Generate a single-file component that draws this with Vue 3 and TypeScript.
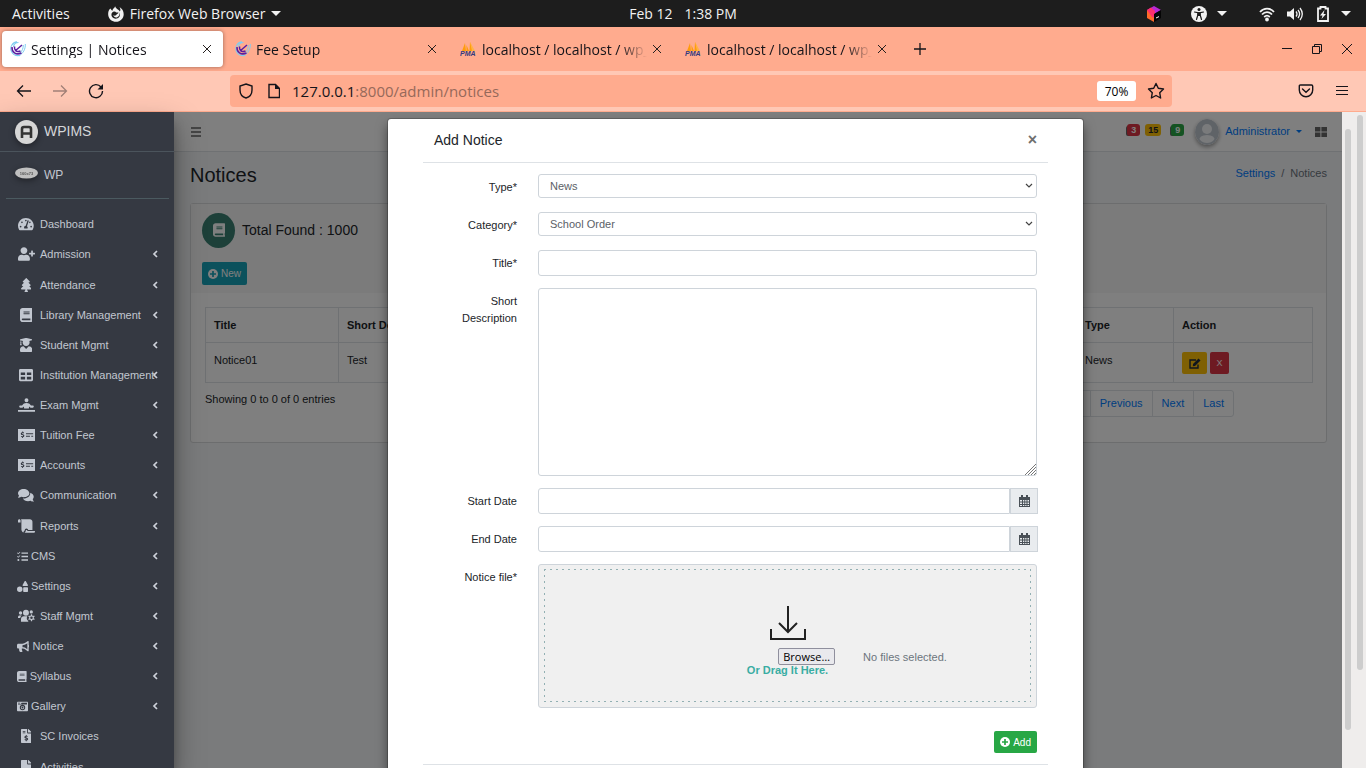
<script setup lang="ts">
import { ref } from 'vue'

interface Tab { title: string; kind: 'app' | 'pma'; active?: boolean }
interface NavItem { label: string; icon: string; arrow: boolean; compact?: boolean }

const tabs: Tab[] = [
  { title: 'Settings | Notices', kind: 'app', active: true },
  { title: 'Fee Setup', kind: 'app' },
  { title: 'localhost / localhost / wp_', kind: 'pma' },
  { title: 'localhost / localhost / wp_', kind: 'pma' },
]

const nav: NavItem[] = [
  { label: 'Dashboard', icon: 'gauge', arrow: false },
  { label: 'Admission', icon: 'userplus', arrow: true },
  { label: 'Attendance', icon: 'tree', arrow: true },
  { label: 'Library Management', icon: 'book', arrow: true },
  { label: 'Student Mgmt', icon: 'graduate', arrow: true },
  { label: 'Institution Management', icon: 'table', arrow: true },
  { label: 'Exam Mgmt', icon: 'reader', arrow: true },
  { label: 'Tuition Fee', icon: 'check', arrow: true },
  { label: 'Accounts', icon: 'check', arrow: true },
  { label: 'Communication', icon: 'comments', arrow: true },
  { label: 'Reports', icon: 'scroll', arrow: true },
  { label: 'CMS', icon: 'tasks', arrow: true, compact: true },
  { label: 'Settings', icon: 'shapes', arrow: true, compact: true },
  { label: 'Staff Mgmt', icon: 'userscog', arrow: true },
  { label: 'Notice', icon: 'bullhorn', arrow: true, compact: true },
  { label: 'Syllabus', icon: 'book', arrow: true, compact: true },
  { label: 'Gallery', icon: 'camera', arrow: true, compact: true },
  { label: 'SC Invoices', icon: 'invoice', arrow: false },
  { label: 'Activities', icon: 'file', arrow: false },
]

const icons: Record<string, { w: number; d: string }> = {
  gauge: { w: 576, d: 'M288 32C129 32 0 161 0 320c0 53 14 102 39 145 6 10 16 15 27 15h444c11 0 21-5 27-15 25-43 39-92 39-145C576 161 447 32 288 32zm0 64c18 0 32 14 32 32s-14 32-32 32-32-14-32-32 14-32 32-32zM96 384c-18 0-32-14-32-32s14-32 32-32 32 14 32 32-14 32-32 32zm48-160c-18 0-32-14-32-32s14-32 32-32 32 14 32 32-14 32-32 32zm203 192H229c-4-10-7-20-7-32 0-34 26-62 60-64l62-184c4-13 18-20 30-15 13 4 20 18 15 30l-61 184c28 21 35 53 19 81zm60-216c5-20 12-40 25-40 18 0 32 14 32 32s-14 32-32 32-25-12-25-24zm73 184c-18 0-32-14-32-32s14-32 32-32 32 14 32 32-14 32-32 32z' },
  userplus: { w: 640, d: 'M624 208h-64v-64c0-8.800-7.200-16-16-16h-32c-8.800 0-16 7.200-16 16v64h-64c-8.800 0-16 7.200-16 16v32c0 8.800 7.200 16 16 16h64v64c0 8.800 7.200 16 16 16h32c8.800 0 16-7.200 16-16v-64h64c8.800 0 16-7.200 16-16v-32c0-8.800-7.200-16-16-16zm-400 48c70.700 0 128-57.300 128-128S294.700 0 224 0 96 57.300 96 128s57.300 128 128 128zm89.600 32h-16.700c-22.200 10.200-46.900 16-72.900 16s-50.600-5.800-72.900-16h-16.700C60.200 288 0 348.200 0 422.400V464c0 26.500 21.500 48 48 48h352c26.500 0 48-21.500 48-48v-41.600c0-74.200-60.200-134.400-134.400-134.400z' },
  tree: { w: 384, d: 'M378 378l-80-90h31c9 0 17-5 21-13s3-17-3-24l-79-91h29c9 0 18-5 21-14 4-8 2-17-4-24L204 5c-6-6-18-6-24 0L70 122c-6 7-8 16-4 24 3 9 12 14 21 14h29l-79 91c-6 7-7 16-3 24s12 13 21 13h31L6 378c-6 7-8 17-4 25s12 13 21 13h137v24l-30 49c-6 11 2 23 14 23h96c12 0 20-12 14-23l-30-49v-24h137c9 0 17-5 21-13s2-18-4-25z' },
  book: { w: 448, d: 'M448 360V24c0-13-11-24-24-24H96C43 0 0 43 0 96v320c0 53 43 96 96 96h328c13 0 24-11 24-24v-16c0-7-3-14-9-19-4-15-4-59 0-74 6-5 9-12 9-19zM128 134c0-3 3-6 6-6h212c3 0 6 3 6 6v20c0 3-3 6-6 6H134c-3 0-6-3-6-6zm0 64c0-3 3-6 6-6h212c3 0 6 3 6 6v20c0 3-3 6-6 6H134c-3 0-6-3-6-6zm253 250H96c-18 0-32-14-32-32s14-32 32-32h285c-2 17-2 47 0 64z' },
  graduate: { w: 448, d: 'M320 304l-96 96-96-96C57 307 0 350 0 422v42c0 27 22 48 48 48h352c27 0 48-21 48-48v-42c0-72-57-115-128-118zM13 84l7 2v59c-7 4-12 11-12 20 0 8 4 15 11 19L3 248c-2 7 2 14 8 14h42c6 0 10-7 8-14l-16-64c7-4 11-11 11-19 0-9-5-16-12-20V92l64 15c-8 16-12 33-12 53 0 71 57 128 128 128s128-57 128-128c0-20-5-37-12-53l95-23c18-5 18-31 0-36L244 2c-13-3-27-3-40 0L13 48c-18 5-18 31 0 36z' },
  table: { w: 512, d: 'M464 32H48C21 32 0 53 0 80v352c0 27 21 48 48 48h416c27 0 48-21 48-48V80c0-27-21-48-48-48zM224 416H64v-96h160zm0-160H64v-96h160zm224 160H288v-96h160zm0-160H288v-96h160z' },
  reader: { w: 640, d: 'M320 0a74 74 0 110 148 74 74 0 010-148zM0 440h640v72H0zM210 210c60-44 160-44 220 0l58 66h66c26 0 40 18 40 40s-14 40-40 40h-82l-52-44-12 78H232l-12-78-52 44H86c-26 0-40-18-40-40s14-40 40-40h66z' },
  check: { w: 640, d: 'M0 32h640v448H0zM160 125v28c-32 5-54 24-54 52 0 34 26 46 50 54 24 8 40 11 40 26 0 13-12 18-27 18-17 0-35-5-49-14l-13 34c14 9 31 14 48 16v29h31v-30c31-5 52-24 52-54 0-33-22-45-50-54-23-8-39-12-39-26 0-11 10-16 25-16 17 0 30 5 42 11l13-34c-11-6-24-10-38-12v-28zM300 190v36h270v-36zM300 286v36h150v-36zM500 286v36h70v-36z' },
  comments: { w: 576, d: 'M416 192c0-88-93-160-208-160S0 104 0 192c0 34 14 66 38 92-14 31-35 55-36 56-3 3-3 7-1 11 2 3 5 5 9 5 46 0 84-19 107-35 28 9 59 14 91 14 115 0 208-55 208-143zm122 220c24-26 38-58 38-92 0-67-53-124-129-148 1 7 1 13 1 20 0 106-108 192-240 192-11 0-21-1-32-2 32 57 106 98 192 98 33 0 64-5 91-14 23 16 61 35 107 35 4 0 7-3 9-6 2-4 1-8-2-11 0 0-22-24-35-72z' },
  scroll: { w: 640, d: 'M48 0C22 0 0 22 0 48v64c0 9 7 16 16 16h80V48C96 22 75 0 48 0zm208 412c0-33 25-60 57-64 38-4 71 26 71 63h160V96c0-53-43-96-96-96H111c10 14 17 30 17 48v336c0 56 38 104 91 120-28-25 5-55 37-92zm160 36h208c9 0 16 7 16 16 0 27-22 48-48 48H240c29-16 48-38 48-70 0-18 12-34 30-37 20-3 37 13 37 32 0 6 5 11 11 11z' },
  tasks: { w: 512, d: 'M0 94l24-24 36 36L132 34l24 24L60 152zM0 254l24-24 36 36 72-72 24 24-96 94zM64 368a48 48 0 110 96 48 48 0 010-96zM208 64h304v64H208zM208 224h304v64H208zM208 384h304v64H208z' },
  shapes: { w: 512, d: 'M128 256a128 128 0 100 256 128 128 0 000-256zM480 288H320c-18 0-32 14-32 32v160c0 18 14 32 32 32h160c18 0 32-14 32-32V320c0-18-14-32-32-32zM412 17c-13-22-43-22-56 0l-96 166c-12 22 4 49 28 49h192c24 0 40-27 28-49z' },
  userscog: { w: 640, d: 'M96 80a64 64 0 110 128 64 64 0 010-128zM300 20a112 112 0 110 224 112 112 0 010-224zM500 40a62 62 0 110 124 62 62 0 010-124zM0 300c0-38 26-64 64-64h80c-34 24-54 54-58 98H0zM112 382c0-68 48-114 108-114h132c-12 18-18 38-18 58-12 48 12 88 52 112v34H112zM487 190l42 0 8 46 28 16 42-16 23 40-36 30v32l36 30-23 40-42-16-28 16-8 48h-42l-8-48-28-16-42 16-23-40 36-30v-32l-36-30 23-40 42 16 28-16zM508 274a48 48 0 100 96 48 48 0 000-96z' },
  bullhorn: { w: 576, d: 'M576 240c0-24-13-44-32-55V32c0-9-7-32-32-32-7 0-14 2-20 7l-85 68c-43 34-97 53-151 53H64c-35 0-64 29-64 64v96c0 35 29 64 64 64h34c-1 10-2 21-2 32 0 40 9 77 26 110 5 11 16 18 28 18h74c26 0 42-30 26-51-17-22-27-49-27-77 0-11 2-22 5-32h28c54 0 108 19 151 53l85 68c6 5 13 7 20 7 24 0 32-22 32-32V295c19-11 32-31 32-55zM480 381l-33-26c-54-43-122-67-191-67v-96c69 0 137-24 191-67l33-26z' },
  camera: { w: 512, d: 'M48 32C22 32 0 54 0 80v352c0 26 22 48 48 48h416c26 0 48-22 48-48V80c0-26-22-48-48-48zm0 48h100v32H48zm0 80V140h130l42-60h244v80zM256 180a126 126 0 110 252 126 126 0 010-252zm0 48a78 78 0 100 156 78 78 0 000-156zm0 32a46 46 0 110 92 46 46 0 010-92z' },
  invoice: { w: 384, d: 'M376 106L278 8c-4-5-10-8-17-8h-5v128h128v-6c0-6-3-12-8-16zM224 136V0H24C11 0 0 11 0 24v464c0 13 11 24 24 24h336c13 0 24-11 24-24V160H248c-13 0-24-11-24-24zM64 72h96v24H64zm0 56h96v24H64zm144 288v34h-32v-34c-18-1-36-8-50-20l22-28c14 10 28 14 42 14 20 0 24-20 4-27l-34-12c-54-20-44-88 16-98v-29h32v30c16 2 30 8 42 18l-22 28c-14-10-26-12-36-12-18 0-22 18-2 24l36 12c56 20 44 90-18 100z' },
  file: { w: 384, d: 'M224 136V0H24C11 0 0 11 0 24v464c0 13 11 24 24 24h336c13 0 24-11 24-24V160H248c-13 0-24-11-24-24zm160-14v6H256V0h6c6 0 12 3 17 7l98 98c4 5 7 11 7 17z' },
}

const noticeType = ref('News')
const category = ref('School Order')
const title = ref('')
const description = ref('')
const startDate = ref('')
const endDate = ref('')
const picker = ref<HTMLInputElement | null>(null)
const browse = () => picker.value?.click()
</script>

<template>
  <div class="desktop">
    <header class="topbar">
      <div class="top-left">
        <span>Activities</span>
        <span class="top-app">
          <svg width="16" height="16" viewBox="0 0 16 16"><path d="M7 0C7.200 2 4.500 2.500 4.300 5L2.300 2.500C.6 4.200 0 6.300.2 9c.5 4 3.800 6.800 7.800 6.800 4.300 0 7.700-3.500 7.700-7.600 0-3-1.500-5.600-4.200-7.200 1 1.600 1.200 3 .4 4.500C11 3.500 9.500 3.500 8.800 2.700 8 1.900 7.300 1.200 7 0zM6.200 5.600c1 .1 1.600.5 2 1h2.300c-.2 1.200-1.500 1.300-1.900 2-.8 1.600-2.600 1.200-3.300.4.3 1.900 2.200 2.900 4 2.200 2-.8 2.600-2.800 1.800-4.600 1.600 1.900.9 5.300-2.100 6-3.300.8-6-1.700-5.500-4.500.2-1.200 1-2.200 2.700-2.500z" fill="#f2f2f2" fill-rule="evenodd" /></svg>
          Firefox Web Browser
          <i class="tri"></i>
        </span>
      </div>
      <div class="clock"><span>Feb 12</span><span>1:38 PM</span></div>
      <div class="top-right">
        <svg class="cube" width="16" height="16" viewBox="0 0 16 16"><path d="M8 0l7 4-7 4-7-4z" fill="#b827d6" /><path d="M1 4l7 4v8l-7-4z" fill="#ff6a2a" /><path d="M1 4l4-2.500L9 5v7l-3-1z" fill="#ff2f6e" /><path d="M8 8l7-4v8l-7 4z" fill="#050505" /><path d="M10 12l3-1.400" stroke="#fff" /></svg>
        <svg class="access" width="16" height="16" viewBox="0 0 16 16"><circle cx="8" cy="8" r="8" fill="#f2f2f2" /><circle cx="8" cy="3.600" r="1.500" fill="#1d1d1d" /><path d="M3.500 6l4.500.8 4.500-.8M6.700 7v2.500l-1.200 4M9.300 7v2.500l1.200 4M7 7h2v2.500H7z" fill="#1d1d1d" stroke="#1d1d1d" stroke-width="1.200" stroke-linecap="round" /></svg>
        <i class="tri gap-sm"></i>
        <svg class="wifi" width="16" height="16" viewBox="0 0 16 16" fill="none" stroke="#f2f2f2" stroke-width="1.800"><path d="M1 6c4-4.500 10-4.500 14 0" /><path d="M3 8.500c3-3.200 7-3.200 10 0" /><path d="M5.200 11c1.800-1.700 3.800-1.700 5.600 0" /><circle cx="8" cy="13.500" r="1" fill="#f2f2f2" /></svg>
        <svg class="vol" width="16" height="16" viewBox="0 0 16 16"><path d="M0 5.500h3L7 2v12l-4-3.500H0z" fill="#f2f2f2" /><path d="M9 5.500q2 2.500 0 5M11 4q3.200 4 0 8M13 2q4.600 6 0 12" fill="none" stroke="#f2f2f2" stroke-width="1.300" /></svg>
        <svg class="bat" width="12" height="16" viewBox="0 0 12 16"><path d="M1 2.500h2.500V1h5v1.500H11V15H1z" fill="none" stroke="#f2f2f2" stroke-width="1.800" /><path d="M7.500 4L3 9.500h2.500L4.500 13 9 8H6.500z" fill="#f2f2f2" /></svg>
        <i class="tri gap-sm"></i>
      </div>
    </header>

    <div class="tabstrip">
      <div v-for="(t, i) in tabs" :key="i" class="tab" :class="{ active: t.active }">
        <svg v-if="t.kind === 'app'" width="16" height="16" viewBox="0 0 16 16" fill="none"><path d="M4 2C1 4 0 7.500 1.500 10.500S6.500 15 9.500 14.500M8.500 1.500A5 5 0 003.500 6M7 .8C5 1 3 2 2 4" stroke="#7fcdf0" stroke-width="1.100" /><path d="M15.300 3c.3 5-2 9-6.300 12M13.300 4c0 3-1 6-3.300 8" stroke="#7fcdf0" /><path d="M2 6c-.5 5 4 8.500 9.500 6M4.500 5.500c-.5 4 2.500 6 6 4.500M5 10L12 4" stroke="#5b1fa0" stroke-width="1.500" /></svg>
        <svg v-else width="17" height="16" viewBox="0 0 17 16"><path d="M5 2L2 10h4zM6.500 4v6H9zM10 1L9.500 10H14z" fill="#ff9c0b" /><path d="M10 1l5 9h-3z" fill="#ffb347" /><text x="0" y="15" font-family="Liberation Sans" font-size="7" font-weight="700" font-style="italic" fill="#343a7d">PMA</text></svg>
        <span class="tab-title">{{ t.title }}</span>
        <button class="icon-btn" aria-label="Close tab"><svg width="10" height="10" viewBox="0 0 10 10"><path d="M1 1l8 8M9 1L1 9" stroke="#25201f" /></svg></button>
      </div>
      <button class="icon-btn plus" aria-label="New tab"><svg width="12" height="12" viewBox="0 0 12 12"><path d="M6 0v12M0 6h12" stroke="#15141a" stroke-width="1.300" /></svg></button>
      <div class="win">
        <button class="icon-btn" aria-label="Minimize"><svg width="12" height="12" viewBox="0 0 12 12"><path d="M1 5.500h10" stroke="#15141a" /></svg></button>
        <button class="icon-btn" aria-label="Restore"><svg width="12" height="12" viewBox="0 0 12 12" fill="none" stroke="#15141a"><path d="M1.500 3.500h7v7h-7zM3.500 3.500v-2h7v7h-2" /></svg></button>
        <button class="icon-btn" aria-label="Close"><svg width="12" height="12" viewBox="0 0 12 12"><path d="M1 1l10 10M11 1L1 11" stroke="#15141a" /></svg></button>
      </div>
    </div>

    <div class="toolbar">
      <div class="tools">
        <button class="icon-btn" aria-label="Back"><svg width="16" height="16" viewBox="0 0 16 16" fill="none" stroke="#15141a" stroke-width="1.300"><path d="M15 8H1.500M7 2.500L1.500 8 7 13.500" /></svg></button>
        <button class="icon-btn faded" aria-label="Forward"><svg width="16" height="16" viewBox="0 0 16 16" fill="none" stroke="#15141a" stroke-width="1.300"><path d="M1 8h13.500M9 2.500L14.500 8 9 13.500" /></svg></button>
        <button class="icon-btn" aria-label="Reload"><svg width="16" height="16" viewBox="0 0 16 16" fill="none"><path d="M13 4A6.500 6.500 0 1014.500 8" stroke="#15141a" stroke-width="1.400" /><path d="M15 1v5.500H9.500z" fill="#15141a" /></svg></button>
      </div>
      <div class="urlbar">
        <svg width="16" height="16" viewBox="0 0 16 16" fill="none"><path d="M8 1l6 2v4c0 4-2.500 7-6 8-3.500-1-6-4-6-8V3z" stroke="#15141a" stroke-width="1.400" /></svg>
        <svg class="doc" width="12" height="16" viewBox="0 0 12 16"><path d="M1 1.500h6.500l4 4v9H1z" fill="none" stroke="#15141a" stroke-width="1.400" /><path d="M7 1v5h5z" fill="#15141a" /></svg>
        <span class="url">127.0.0.1<span class="dim">:8000/admin/notices</span></span>
        <button class="zoom">70%</button>
        <button class="icon-btn" aria-label="Bookmark"><svg width="18" height="18" viewBox="0 0 18 18"><path d="M9 1.500l2.300 4.800 5.200.7-3.800 3.700.9 5.300L9 13.500 4.400 16l.9-5.300L1.500 7l5.200-.7z" fill="none" stroke="#15141a" stroke-width="1.400" stroke-linejoin="round" /></svg></button>
      </div>
      <div class="tb-right">
        <button class="icon-btn" aria-label="Pocket"><svg width="16" height="16" viewBox="0 0 16 16" fill="none" stroke="#15141a" stroke-width="1.400"><path d="M2.500 2h11c.8 0 1.200.5 1.200 1.200V7a6.700 6.700 0 01-13.400 0V3.200C1.300 2.500 1.700 2 2.500 2z" /><path d="M4.500 6L8 9.300 11.500 6" stroke-linecap="round" /></svg></button>
        <button class="icon-btn" aria-label="Menu"><svg width="12" height="12" viewBox="0 0 12 12"><path d="M0 1.500h12M0 5.500h12M0 9.500h12" stroke="#15141a" stroke-width="1.200" /></svg></button>
      </div>
    </div>

    <div class="page">
      <aside class="sidebar">
        <a href="#" class="brand">
          <svg class="logo" width="23" height="24" viewBox="0 0 23 24"><ellipse cx="11.500" cy="12" rx="11.500" ry="12" fill="#d6d6d6" /><path d="M7 18V9q0-2 2-2h5q2 0 2 2v9M7 13.500h9" fill="none" stroke="#333" stroke-width="2.600" /></svg>
          WPIMS
        </a>
        <a href="#" class="user">
          <svg class="oval" width="23" height="12" viewBox="0 0 23 12"><ellipse cx="11.500" cy="6" rx="11.500" ry="5.500" fill="#bfbfbf" /><text x="11.500" y="7.500" font-size="4" font-weight="700" font-family="Liberation Sans" text-anchor="middle" fill="#555">160x73</text></svg>
          WP
        </a>
        <nav class="nav">
          <a v-for="n in nav" :key="n.label" href="#" class="item" :class="{ compact: n.compact }">
            <span class="ico"><svg :viewBox="`0 0 ${icons[n.icon].w} 512`"><path :d="icons[n.icon].d" fill-rule="evenodd" fill="currentColor" /></svg></span>
            <span>{{ n.label }}</span>
            <svg v-if="n.arrow" class="arrow" width="6" height="8" viewBox="0 0 6 8"><path d="M5 1L2 4l3 3" fill="none" stroke="#ced2da" stroke-width="1.700" /></svg>
          </a>
        </nav>
      </aside>

      <div class="main">
        <div class="navbar">
          <button class="icon-btn" aria-label="Toggle sidebar"><svg width="10" height="10" viewBox="0 0 10 10"><path d="M0 1h10M0 5h10M0 9h10" stroke="#666" stroke-width="1.300" /></svg></button>
          <div class="nav-right">
            <span class="badge red">3</span>
            <span class="badge yellow">15</span>
            <span class="badge green">9</span>
            <svg class="avatar" width="24" height="26" viewBox="0 0 24 26"><defs><clipPath id="face"><ellipse cx="12" cy="13" rx="10" ry="11" /></clipPath></defs><ellipse cx="12" cy="13" rx="12" ry="13" fill="#bfc6cf" /><g clip-path="url(#face)" fill="#f4f6f9"><circle cx="12" cy="10" r="5" /><path d="M4 25v-3q0-6 8-6t8 6v3z" /></g></svg>
            <a href="#" class="admin">Administrator<i class="caret"></i></a>
            <svg class="grid4" width="12" height="10" viewBox="0 0 12 10"><path d="M0 0h5.400v4.500H0zM6.400 0H12v4.500H6.400zM0 5.500h5.400V10H0zM6.400 5.500H12V10H6.400z" fill="#666" /></svg>
          </div>
        </div>

        <div class="content">
          <div class="head">
            <h1>Notices</h1>
            <div class="crumbs"><a href="#">Settings</a><span>/</span><span>Notices</span></div>
          </div>
          <section class="card">
            <div class="card-head">
              <div class="total">
                <span class="disc"><svg width="12" height="14" viewBox="0 0 448 512"><path :d="icons.book.d" fill-rule="evenodd" fill="#fff" /></svg></span>
                Total Found : 1000
              </div>
              <button class="btn info"><svg width="10" height="10" viewBox="0 0 10 10"><circle cx="5" cy="5" r="5" fill="#fff" /><path d="M5 2v6M2 5h6" stroke="#17a2b8" stroke-width="1.700" /></svg>New</button>
            </div>
            <div class="card-body">
              <table>
                <thead><tr><th class="c1">Title</th><th>Short Description</th><th class="c3">Type</th><th class="c4">Action</th></tr></thead>
                <tbody><tr><td>Notice01</td><td>Test</td><td>News</td><td><div class="acts"><button class="btn warn" aria-label="Edit"><svg width="12" height="11" viewBox="0 0 12 11"><path d="M7 2H1v8h8V6.500" fill="none" stroke="#1f2d3d" stroke-width="1.400" /><path d="M4 6l5.500-5.500 2 2L6 8l-2.200.3z" fill="#1f2d3d" /></svg></button><button class="btn danger">X</button></div></td></tr></tbody>
              </table>
              <div class="foot">
                <span>Showing 0 to 0 of 0 entries</span>
                <div class="pager"><a href="#">First</a><a href="#">Previous</a><a href="#">Next</a><a href="#">Last</a></div>
              </div>
            </div>
          </section>
        </div>

        <div class="backdrop">
          <form class="modal" @submit.prevent>
            <div class="modal-head">
              <h2>Add Notice</h2>
              <button type="button" class="icon-btn close" aria-label="Close dialog">×</button>
            </div>
            <div class="fields">
              <label for="type">Type*</label>
              <div class="sel"><select id="type" v-model="noticeType"><option>News</option></select><svg width="8" height="6" viewBox="0 0 8 6"><path d="M1 1l3 3 3-3" fill="none" stroke="#444" stroke-width="1.200" /></svg></div>
              <label for="category">Category*</label>
              <div class="sel"><select id="category" v-model="category"><option>School Order</option></select><svg width="8" height="6" viewBox="0 0 8 6"><path d="M1 1l3 3 3-3" fill="none" stroke="#444" stroke-width="1.200" /></svg></div>
              <label for="title">Title*</label>
              <input id="title" v-model="title" type="text" class="ctl">
              <label for="desc">Short Description</label>
              <div class="area"><textarea id="desc" v-model="description" class="ctl"></textarea><svg width="11" height="11" viewBox="0 0 11 11"><path d="M0 11L11 0M3 11l8-8M6 11l5-5M9 11l2-2" stroke="#777" /></svg></div>
              <label for="start">Start Date</label>
              <div class="date"><input id="start" v-model="startDate" type="text" class="ctl"><span class="addon"><svg width="11" height="12" viewBox="0 0 11 12"><path d="M0 2h2V0h2v2h3V0h2v2h2v10H0zM1 5v1.500h2V5zm3 0v1.500h1.300V5zm2.200 0v1.500h1.300V5zm2.300 0v1.500H10V5zM1 7.500V9h2V7.500zm3 0V9h1.300V7.500zm2.200 0V9h1.300V7.500zm2.300 0V9H10V7.500zM1 10v1h2v-1zm3 0v1h1.300v-1zm2.200 0v1h1.300v-1zm2.300 0v1H10v-1z" fill="#495057" fill-rule="evenodd" /></svg></span></div>
              <label for="end">End Date</label>
              <div class="date"><input id="end" v-model="endDate" type="text" class="ctl"><span class="addon"><svg width="11" height="12" viewBox="0 0 11 12"><path d="M0 2h2V0h2v2h3V0h2v2h2v10H0zM1 5v1.500h2V5zm3 0v1.500h1.300V5zm2.200 0v1.500h1.300V5zm2.300 0v1.500H10V5zM1 7.500V9h2V7.500zm3 0V9h1.300V7.500zm2.200 0V9h1.300V7.500zm2.300 0V9H10V7.500zM1 10v1h2v-1zm3 0v1h1.300v-1zm2.200 0v1h1.300v-1zm2.300 0v1H10v-1z" fill="#495057" fill-rule="evenodd" /></svg></span></div>
              <label for="file">Notice file*</label>
              <div class="drop">
                <input id="file" ref="picker" type="file" class="hidden-file">
                <div class="dashes">
                  <svg width="36" height="36" viewBox="0 0 36 36" fill="none" stroke="#222" stroke-width="2"><path d="M18 1v25M9 18l9 9 9-9M1 24v10h34V24" /></svg>
                  <div class="pick"><button type="button" class="browse" @click="browse">Browse…</button><span>No files selected.</span></div>
                  <strong>Or Drag It Here.</strong>
                </div>
              </div>
            </div>
            <div class="modal-foot">
              <button class="btn success"><svg width="10" height="10" viewBox="0 0 10 10"><circle cx="5" cy="5" r="5" fill="#fff" /><path d="M5 2v6M2 5h6" stroke="#28a745" stroke-width="1.700" /></svg>Add</button>
            </div>
          </form>
        </div>
      </div>

      <div class="track inner"><i></i></div>
      <div class="track outer"><i></i></div>
    </div>
  </div>
</template>

<style>
html, body { margin: 0; overflow: hidden; }
</style>

<style scoped>
* { box-sizing: border-box; }
.desktop { height: 100vh; display: flex; flex-direction: column; overflow: hidden; font: 11px/17px "Liberation Sans", Arial, sans-serif; color: #212529; }
a { text-decoration: none; color: #007bff; }
svg { display: block; flex: none; }
button, input, select, textarea { font: inherit; margin: 0; }
.icon-btn { border: 0; background: none; padding: 0; display: flex; align-items: center; justify-content: center; flex: none; }

.topbar { flex: none; height: 27px; background: #1d1d1d; color: #f2f2f2; display: grid; grid-template-columns: 1fr auto 1fr; align-items: center; font-family: "Open Sans", "Noto Sans", sans-serif; font-size: 14px; padding: 0 15px; white-space: nowrap; }
.top-left, .top-app, .clock, .top-right { display: flex; align-items: center; }
.top-left { gap: 38px; margin-left: -3px; }
.top-app { gap: 6px; }
.clock { gap: 12px; }
.top-right { justify-content: flex-end; }
.tri { border: 5px solid transparent; border-top-color: #f2f2f2; border-bottom: 0; }
.gap-sm { margin-left: 10px; }
.access { margin-left: 29px; }
.wifi { margin-left: 32px; }
.vol { margin-left: 12px; }
.bat { margin-left: 14px; }
.top-right .gap-sm:last-child { margin-left: 12px; }

.tabstrip { flex: none; height: 44px; background: #ffab8e; display: flex; align-items: center; gap: 4px; padding: 0 13px 0 2px; font-family: "Open Sans", "Noto Sans", sans-serif; font-size: 14px; color: #15141a; }
.tab { width: 221px; height: 36px; border-radius: 4px; display: flex; align-items: center; gap: 5px; padding: 0 11px 0 8px; }
.tab.active { background: #fff; box-shadow: 0 0 4px rgba(0, 0, 0, .4); }
.tab-title { flex: 1; min-width: 0; overflow: hidden; white-space: nowrap; mask-image: linear-gradient(to right, #000 84%, transparent); }
.plus { margin-left: 12px; }
.win { margin-left: auto; display: flex; gap: 18px; }

.toolbar { flex: none; height: 41px; background: #ffc8b5; border-bottom: 1px solid #ffab8e; display: flex; align-items: center; padding: 0 18px 0 16px; font-family: "Open Sans", "Noto Sans", sans-serif; font-size: 15px; color: #15141a; }
.tools { display: flex; gap: 20px; width: 214px; }
.faded { opacity: .4; }
.urlbar { flex: 1; height: 32px; background: #ffab8e; border-radius: 4px; display: flex; align-items: center; padding: 0 7px 0 8px; }
.doc { margin-left: 14px; }
.url { flex: 1; margin-left: 12px; }
.dim { color: #96695a; }
.zoom { border: 0; background: #fff; border-radius: 3px; height: 20px; width: 39px; padding: 0; font-size: 12px; margin-right: 11px; }
.tb-right { display: flex; gap: 22px; margin-left: 126px; }

.page { flex: 1; min-height: 0; display: flex; background: #efedec; }
.sidebar { flex: none; width: 174px; overflow: hidden; background: #353942; color: #c2c7d0; z-index: 2; box-shadow: 0 14px 28px rgba(0, 0, 0, .35), 0 10px 10px rgba(0, 0, 0, .22); }
.sidebar a { color: #c2c7d0; display: flex; align-items: center; }
.sidebar .brand { height: 40px; border-bottom: 1px solid #4b545c; padding-left: 15px; gap: 6px; font-size: 14px; color: #d4d6d9; }
.logo, .oval { filter: drop-shadow(0 2px 3px rgba(0, 0, 0, .4)); }
.sidebar .user { height: 47px; margin: 0 5px 0 6px; padding-left: 9px; gap: 6px; border-bottom: 1px solid #4b5a60; font-size: 12px; }
.oval { margin-bottom: 4px; }
.nav { padding-top: 10px; }
.nav .item { height: 30px; padding: 0 16px 0 17px; gap: 5px; white-space: nowrap; position: relative; }
.item:nth-child(8n+3) { margin-top: 1px; }
.ico { width: 18px; height: 14px; display: flex; justify-content: center; flex: none; }
.ico svg { height: 14px; max-width: 17px; }
.nav .compact { gap: 3px; }
.compact .ico { width: auto; height: 11px; }
.compact .ico svg { height: 11px; }
.arrow { position: absolute; right: 16px; top: 11px; }

.main { flex: 1; min-width: 0; position: relative; background: #f4f6f9; overflow: hidden; }
.navbar { height: 40px; background: #fff; border-bottom: 1px solid #dee2e6; display: flex; align-items: center; justify-content: space-between; padding: 0 15px 0 17px; }
.nav-right { display: flex; align-items: center; }
.badge { height: 12px; padding: 0 3px; border-radius: 3px; font-size: 9px; line-height: 12px; font-weight: 700; margin-bottom: 3px; }
.red { background: #dc3545; color: #fff; margin-right: 5px; box-shadow: -2px 1px 0 -1px #666; padding: 0 4px; }
.yellow { background: #ffc107; margin-right: 10px; }
.green { background: #28a745; color: #fff; margin-right: 11px; box-shadow: -2px 1px 0 -1px #666; padding: 0 4px; }
.avatar { border-radius: 50%; box-shadow: 0 2px 4px rgba(0, 0, 0, .4); }
.admin { margin-left: 6px; display: flex; align-items: center; gap: 6px; }
.caret { border: 3px solid transparent; border-top-color: #007bff; border-bottom: 0; }
.grid4 { margin-left: 13px; }
.content { padding: 11px 15px 0 16px; }
.head { display: flex; justify-content: space-between; height: 40px; }
h1 { margin: 0; font-size: 20px; line-height: 24px; font-weight: 400; }
.crumbs { display: flex; gap: 6px; line-height: 20px; color: #6c757d; }
.card { background: #fff; border: 1px solid #d9dbdd; border-radius: 3px; height: 240px; }
.card-head { background: #f7f7f7; height: 89px; padding: 8px 11px; }
.total { display: flex; align-items: center; gap: 7px; font-size: 14px; line-height: 18px; height: 36px; margin-bottom: 14px; }
.disc { width: 33px; height: 35px; border-radius: 50%; background: #3b8072; display: flex; align-items: center; justify-content: center; }
.btn { border: 0; border-radius: 2px; display: flex; align-items: center; justify-content: center; gap: 3px; font-size: 10px; color: #fff; padding: 0 6px; height: 22px; }
.info { background: #17a2b8; height: 23px; }
.card-body { padding: 14px 13px 0 14px; }
table { width: 100%; border-collapse: collapse; table-layout: fixed; }
th, td { border: 1px solid #dee2e6; text-align: left; padding: 9px 8px 8px; }
th { height: 34px; }
td { height: 40px; vertical-align: top; padding-bottom: 7px; }
.c1 { width: 133px; }
.c3 { width: 97px; }
.c4 { width: 139px; }
.acts { display: flex; gap: 3px; }
.warn { background: #ffc107; width: 25px; padding: 0; }
.danger { background: #dc3545; width: 19px; padding: 0; font-size: 9px; }
.foot { display: flex; justify-content: space-between; align-items: flex-start; padding: 7px 79px 0 0; line-height: 18px; }
.pager { display: flex; }
.pager a { border: 1px solid #dee2e6; margin-left: -1px; padding: 5px 9px; line-height: 15px; }
.pager a:last-child { border-radius: 0 3px 3px 0; }

.backdrop { position: absolute; inset: 0; background: rgba(0, 0, 0, .5); padding: 7px 259px 0 214px; }
.modal { background: #fff; border-radius: 3px; box-shadow: 0 6px 12px rgba(0, 0, 0, .5), 0 0 0 1px rgba(0, 0, 0, .2); padding: 1px 35px 0; min-height: 700px; }
.modal-head { display: flex; justify-content: space-between; align-items: center; height: 43px; border-bottom: 1px solid #dee2e6; padding: 0 11px 2px; }
h2 { margin: 0; font-size: 14px; font-weight: 400; }
.close { font-size: 16px; font-weight: 700; color: #6f6f6f; padding-bottom: 2px; }
.fields { display: grid; grid-template-columns: 83px minmax(0, 1fr); column-gap: 21px; row-gap: 12px; padding: 11px 11px 0; }
.fields label { text-align: right; padding-top: 5px; }
.ctl, select { display: block; width: 100%; border: 1px solid #ced4da; border-radius: 3px; background: #fff; color: #495057; outline: 0; }
input.ctl { height: 26px; }
.sel { position: relative; height: 26px; }
select { appearance: none; height: 24px; padding: 0 11px; color: #5b6167; }
.sel svg { position: absolute; right: 4px; top: 9px; }
.area { position: relative; }
textarea.ctl { height: 188px; resize: none; }
.area svg { position: absolute; right: 1px; bottom: 1px; }
.date { display: flex; margin-right: -1px; }
.date .ctl { border-radius: 3px 0 0 3px; flex: 1; min-width: 0; }
.addon { width: 28px; height: 26px; border: 1px solid #ced4da; background: #e9ecef; display: flex; align-items: center; justify-content: center; }
.drop { height: 144px; background: #f0f0f0; border: 1px solid #ced4da; border-radius: 3px; padding: 4px 5px 5px; }
.hidden-file { position: absolute; width: 1px; height: 1px; opacity: 0; }
.dashes {
  height: 100%; display: flex; flex-direction: column; align-items: center; padding-top: 36px;
  --dash: #92b0b3 0 2px, transparent 2px 6px;
  background:
    repeating-linear-gradient(to right, var(--dash)) top / 100% 1px no-repeat,
    repeating-linear-gradient(to right, var(--dash)) bottom / 100% 1px no-repeat,
    repeating-linear-gradient(to bottom, var(--dash)) left / 1px 100% no-repeat,
    repeating-linear-gradient(to bottom, var(--dash)) right / 1px 100% no-repeat;
}
.pick { display: flex; align-items: center; gap: 28px; margin: 7px 0 0 150px; color: #6c757d; height: 17px; line-height: 18px; }
.browse { border: 1px solid #8f8f9d; border-radius: 2px; background: #e9e9ed; color: #000; width: 57px; height: 17px; padding: 0; line-height: 14px; font-family: "Open Sans", "Noto Sans", sans-serif; font-size: 11px; }
.dashes strong { color: #39ada3; line-height: 10px; }
.modal-foot { display: flex; justify-content: flex-end; padding: 23px 11px 11px; border-bottom: 1px solid #dee2e6; }
.success { background: #28a745; }

.track { flex: none; width: 12px; padding: 0 3px; background: #efedec; }
.track i { display: block; border-radius: 4px; background: #cdcdcd; }
.inner { padding-top: 17px; }
.inner i { height: 94%; }
.outer { padding-top: 3px; }
.outer i { height: 85%; }
</style>
